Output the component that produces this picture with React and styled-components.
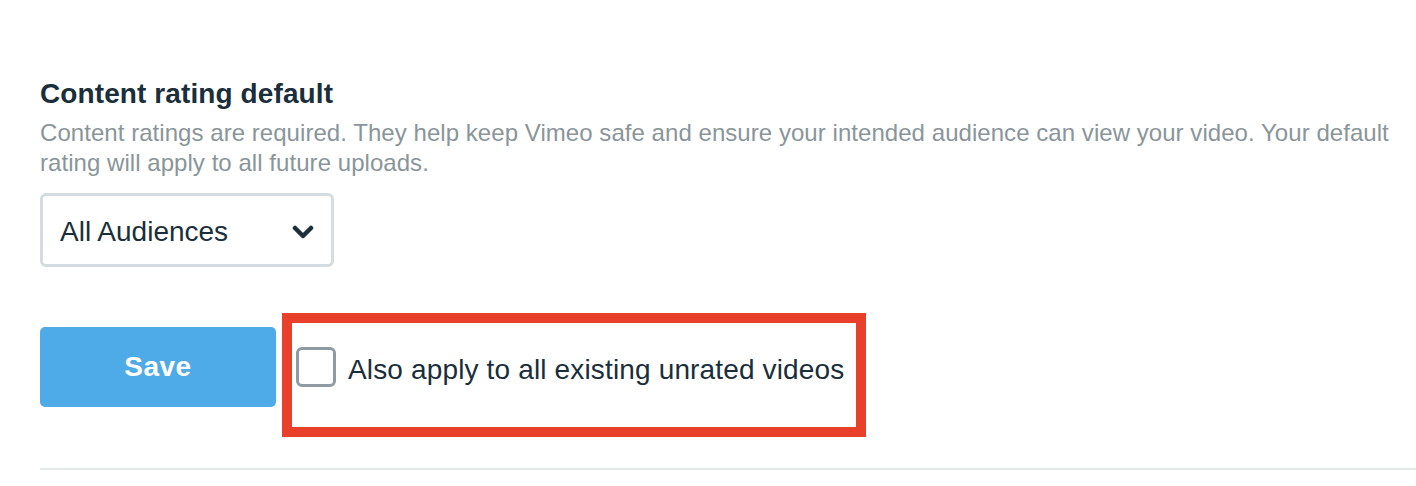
import React from 'react'
import styled, {createGlobalStyle} from 'styled-components'

const Global = createGlobalStyle`
   body {
      margin:0;
      background:#fff;
      font-family:"Liberation Sans", Arial, sans-serif;
      color:#1a2e3b;
   }
`

const Section = styled.section`
   padding:76px 0 0 40px;
   overflow:hidden;
`

const Title = styled.h2`
   margin:0;
   font-size:28px;
   line-height:36px;
   font-weight:700;
   letter-spacing:0.1px;
   color:#1a2e3b;
`

const Description = styled.p`
   margin:6px 0 0;
   font-size:24px;
   line-height:30px;
   letter-spacing:0.05px;
   color:#8a959a;
   max-width:1370px;
`

const Select = styled.div`
   box-sizing:border-box;
   margin-top:15px;
   width:294px;
   height:74px;
   border:3px solid #d4dcdf;
   border-radius:6px;
   display:flex;
   align-items:center;
   justify-content:space-between;
   padding:3px 17px 0 17px;
   font-size:28px;
   color:#1a2e3b;
`

const Actions = styled.div`
   display:flex;
   align-items:flex-start;
   gap:6px;
   margin-top:46px;
`

const SaveButton = styled.button`
   margin-top:14px;
   width:236px;
   height:80px;
   border:0;
   border-radius:5px;
   background:#4eabe8;
   color:#fff;
   font-family:inherit;
   font-size:28px;
   font-weight:700;
   letter-spacing:0.5px;
`

const Highlight = styled.div`
   border:10px solid #e8402a;
   padding:24px 12px 40px 4px;
   display:flex;
   align-items:center;
   gap:12px;
`

const Checkbox = styled.span`
   box-sizing:border-box;
   width:40px;
   height:40px;
   border:3px solid #8f9aa4;
   border-radius:6px;
`

const Label = styled.span`
   margin-top:5px;
   font-size:28px;
   letter-spacing:0.15px;
   color:#1a2e3b;
`

const Divider = styled.hr`
   margin:31px 0 0;
   border:0;
   height:2px;
   background:#e3e8e9;
`

const Chevron = () => (
   <svg width="22" height="14" viewBox="0 0 22 14">
      <polyline points="3,3 11,11 19,3" fill="none" stroke="#1a2e3b" strokeWidth="4.5" strokeLinecap="round" strokeLinejoin="round" />
   </svg>
)

const App = () => (
   <>
      <Global />
      <Section>
         <Title>Content rating default</Title>
         <Description>
            Content ratings are required. They help keep Vimeo safe and ensure your intended audience can view your video. Your default rating will apply to all future uploads.
         </Description>
         <Select>
            All Audiences
            <Chevron />
         </Select>
         <Actions>
            <SaveButton>Save</SaveButton>
            <Highlight>
               <Checkbox />
               <Label>Also apply to all existing unrated videos</Label>
            </Highlight>
         </Actions>
         <Divider />
      </Section>
   </>
)

export default App
